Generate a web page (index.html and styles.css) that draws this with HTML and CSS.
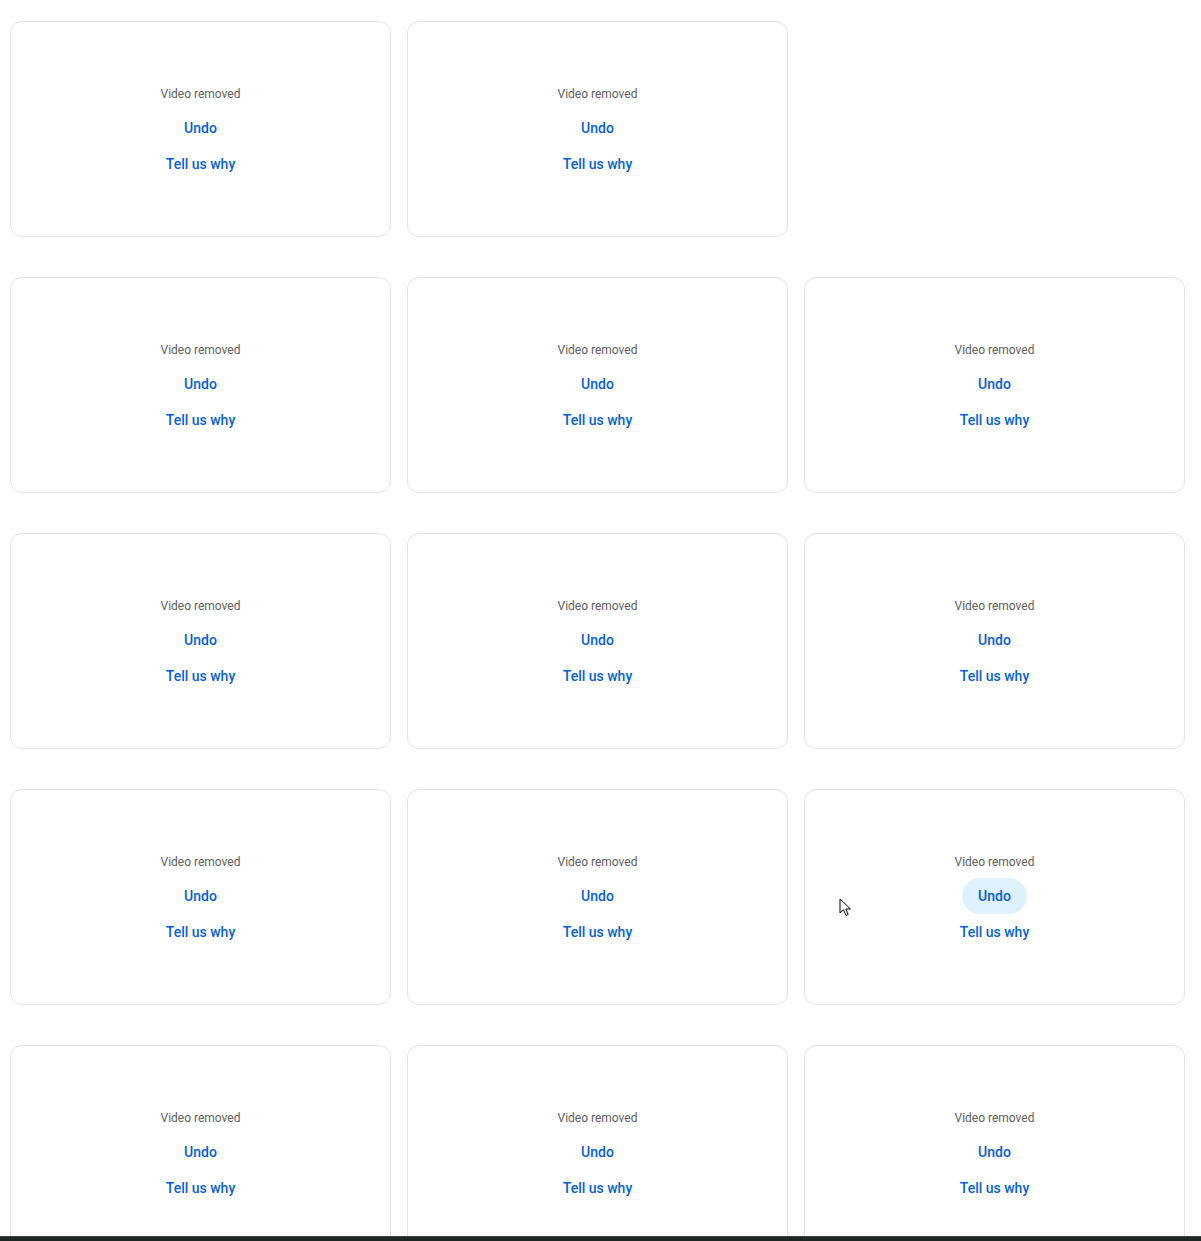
FILE: index.html
```html
<!DOCTYPE html>
<html lang="en">

<head>
  <meta charset="UTF-8">
  <meta name="viewport" content="width=device-width, initial-scale=1.0">
  <title>Removed videos</title>
  <link rel="stylesheet" href="styles.css">
</head>

<body>
  <div class="video-grid">
    <div class="removed-card">
      <span class="removed-label">Video removed</span>
      <button class="removed-btn">Undo</button>
      <button class="removed-btn">Tell us why</button>
    </div>
    <div class="removed-card">
      <span class="removed-label">Video removed</span>
      <button class="removed-btn">Undo</button>
      <button class="removed-btn">Tell us why</button>
    </div>
    <div class="removed-card empty-slot"></div>

    <div class="removed-card">
      <span class="removed-label">Video removed</span>
      <button class="removed-btn">Undo</button>
      <button class="removed-btn">Tell us why</button>
    </div>
    <div class="removed-card">
      <span class="removed-label">Video removed</span>
      <button class="removed-btn">Undo</button>
      <button class="removed-btn">Tell us why</button>
    </div>
    <div class="removed-card">
      <span class="removed-label">Video removed</span>
      <button class="removed-btn">Undo</button>
      <button class="removed-btn">Tell us why</button>
    </div>

    <div class="removed-card">
      <span class="removed-label">Video removed</span>
      <button class="removed-btn">Undo</button>
      <button class="removed-btn">Tell us why</button>
    </div>
    <div class="removed-card">
      <span class="removed-label">Video removed</span>
      <button class="removed-btn">Undo</button>
      <button class="removed-btn">Tell us why</button>
    </div>
    <div class="removed-card">
      <span class="removed-label">Video removed</span>
      <button class="removed-btn">Undo</button>
      <button class="removed-btn">Tell us why</button>
    </div>

    <div class="removed-card">
      <span class="removed-label">Video removed</span>
      <button class="removed-btn">Undo</button>
      <button class="removed-btn">Tell us why</button>
    </div>
    <div class="removed-card">
      <span class="removed-label">Video removed</span>
      <button class="removed-btn">Undo</button>
      <button class="removed-btn">Tell us why</button>
    </div>
    <div class="removed-card">
      <span class="removed-label">Video removed</span>
      <button class="removed-btn is-hover">Undo</button>
      <button class="removed-btn">Tell us why</button>
      <!-- mouse pointer left over the card -->
      <svg class="mouse-cursor" width="13" height="20" viewBox="0 0 13 20">
        <path d="M1 1 L1 15 L4.5 11.8 L7 17.5 L9.2 16.5 L6.8 11 L11.5 11 Z" fill="#fff" stroke="#000" stroke-width="1" stroke-linejoin="round" />
      </svg>
    </div>

    <div class="removed-card">
      <span class="removed-label">Video removed</span>
      <button class="removed-btn">Undo</button>
      <button class="removed-btn">Tell us why</button>
    </div>
    <div class="removed-card">
      <span class="removed-label">Video removed</span>
      <button class="removed-btn">Undo</button>
      <button class="removed-btn">Tell us why</button>
    </div>
    <div class="removed-card">
      <span class="removed-label">Video removed</span>
      <button class="removed-btn">Undo</button>
      <button class="removed-btn">Tell us why</button>
    </div>
  </div>
  <div class="bottom-bar"></div>
</body>

</html>
```

FILE: styles.css
```css
body {
  margin: 0;
  font-family: Roboto, 'Noto Sans', sans-serif;
  background-color: #fff;
}

.video-grid {
  display: grid;
  grid-template-columns: repeat(3, 381px);
  column-gap: 16px;
  row-gap: 40px;
  padding-top: 21px;
  padding-left: 10px;
}

.removed-card {
  position: relative;
  box-sizing: border-box;
  height: 216px;
  padding-top: 8px;
  border: 1px solid #e5e5e5;
  border-radius: 12px;
  display: flex;
  flex-direction: column;
  align-items: center;
  justify-content: center;
}

.empty-slot {
  visibility: hidden;
}

.removed-label {
  font-size: 12px;
  line-height: 18px;
  color: #606060;
  margin-bottom: 7px;
}

.removed-btn {
  height: 36px;
  padding: 0 16px;
  border: none;
  border-radius: 18px;
  background: transparent;
  font-family: Roboto, 'Noto Sans', sans-serif;
  font-size: 14px;
  font-weight: 500;
  color: #065fd4;
  cursor: pointer;
}

.removed-btn.is-hover {
  background-color: #def1ff;
}

.mouse-cursor {
  position: absolute;
  left: 34px;
  top: 108px;
}

.bottom-bar {
  position: fixed;
  left: 0;
  right: 0;
  bottom: 0;
  height: 4px;
  border-top: 1px solid #3b3f3d;
  background-color: #1e2823;
}
```
